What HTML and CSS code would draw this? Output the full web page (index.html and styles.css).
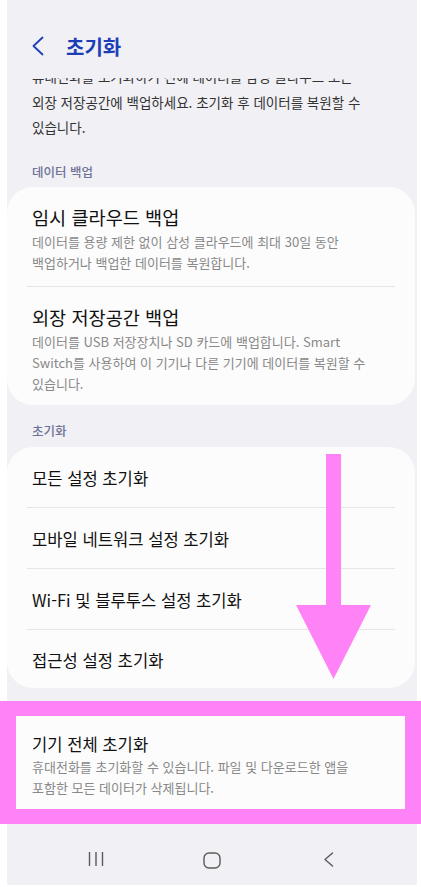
FILE: index.html
```html
<!DOCTYPE html>
<html lang="ko">
<head>
<meta charset="utf-8">
<link rel="stylesheet" href="styles.css">
</head>
<body>
<div class="page">
  <div class="screen">
    <header class="appbar">
      <svg class="back" width="12" height="20" viewBox="0 0 12 20"><path d="M10.5 1.5 L1.5 10 L10.5 18.5"/></svg>
      <h1 class="title">초기화</h1>
    </header>

    <div class="intro-clip">
      <p class="intro">휴대전화를 초기화하기 전에 데이터를 삼성 클라우드 또는<br>외장 저장공간에 백업하세요. 초기화 후 데이터를 복원할 수<br>있습니다.</p>
    </div>

    <div class="section-label first">데이터 백업</div>
    <div class="card">
      <div class="item">
        <div class="item-title big">임시 클라우드 백업</div>
        <div class="item-sub">데이터를 용량 제한 없이 삼성 클라우드에 최대 30일 동안<br>백업하거나 백업한 데이터를 복원합니다.</div>
      </div>
      <div class="divider"></div>
      <div class="item last">
        <div class="item-title big">외장 저장공간 백업</div>
        <div class="item-sub">데이터를 USB 저장장치나 SD 카드에 백업합니다. Smart<br>Switch를 사용하여 이 기기나 다른 기기에 데이터를 복원할 수<br>있습니다.</div>
      </div>
    </div>

    <div class="section-label">초기화</div>
    <div class="card">
      <div class="row">모든 설정 초기화</div>
      <div class="divider"></div>
      <div class="row">모바일 네트워크 설정 초기화</div>
      <div class="divider"></div>
      <div class="row">Wi-Fi 및 블루투스 설정 초기화</div>
      <div class="divider"></div>
      <div class="row last">접근성 설정 초기화</div>
    </div>

    <div class="highlight">
      <div class="hl-item">
        <div class="item-title">기기 전체 초기화</div>
        <div class="item-sub">휴대전화를 초기화할 수 있습니다. 파일 및 다운로드한 앱을<br>포함한 모든 데이터가 삭제됩니다.</div>
      </div>
    </div>

    <nav class="navbar">
      <svg class="nav-icon" width="16" height="14" viewBox="0 0 16 14"><path d="M1.5 0.5 V13.5 M8 0.5 V13.5 M14.5 0.5 V13.5"/></svg>
      <svg class="nav-icon" width="18" height="17" viewBox="0 0 18 17"><rect x="1" y="1" width="16" height="15" rx="5"/></svg>
      <svg class="nav-icon" width="11" height="15" viewBox="0 0 11 15"><path d="M9.5 1 L2 7.5 L9.5 14"/></svg>
    </nav>
  </div>

  <svg class="arrow" width="90" height="235" viewBox="0 0 90 235">
    <rect x="36" y="4" width="15" height="152" />
    <polygon points="6,155 81,155 43.5,229" />
  </svg>
</div>
</body>
</html>
```

FILE: styles.css
```css
html, body {
  margin: 0;
  padding: 0;
  background: #ffffff;
}

body {
  font-family: "Noto Sans CJK KR", "Noto Sans", sans-serif;
  color: #111111;
}

.page {
  position: relative;
  width: 421px;
  height: 887px;
  overflow: hidden;
}

.screen {
  margin-left: 7px;
  width: 410px;
  height: 885px;
  background: #f0f0f5;
  display: flex;
  flex-direction: column;
}

.appbar {
  height: 78px;
  box-sizing: border-box;
  padding: 34px 0 0 25px;
  display: flex;
  align-items: flex-start;
  gap: 22px;
  flex-shrink: 0;
}

.back {
  margin-top: 2px;
  fill: none;
  stroke: #1c3eb8;
  stroke-width: 1.8;
  stroke-linecap: round;
  stroke-linejoin: round;
}

.title {
  margin: 0;
  font-size: 20px;
  line-height: 26px;
  font-weight: 700;
  color: #1c3eb8;
}

.intro-clip {
  height: 63px;
  overflow: hidden;
  flex-shrink: 0;
}

.intro {
  margin: -14px 0 0;
  padding: 0 25px;
  font-size: 13.5px;
  line-height: 25.5px;
  color: #333333;
  white-space: nowrap;
}

.section-label {
  padding: 18px 25px 8px;
  font-size: 12.5px;
  line-height: 16px;
  font-weight: 500;
  color: #6f7398;
}

.section-label.first {
  padding-top: 23px;
  padding-bottom: 7px;
}

.card {
  margin-right: 2px;
  background: #fcfcfc;
  border-radius: 26px;
  flex-shrink: 0;
}

.item {
  padding: 18px 25px 13px;
}

.item.last {
  padding-bottom: 11px;
}

.item-title {
  font-size: 16.6px;
  line-height: 22px;
  color: #111111;
  white-space: nowrap;
}

.item-title.big {
  font-size: 18.6px;
  line-height: 24px;
}

.item-sub {
  margin-top: 2px;
  font-size: 13px;
  line-height: 21px;
  color: #888888;
  white-space: nowrap;
}

.divider {
  height: 1px;
  margin: 0 20px;
  background: #e6e6e9;
}

.row {
  padding: 20px 25px 18px;
  font-size: 16.6px;
  line-height: 22px;
  color: #111111;
  white-space: nowrap;
}

.row.last {
  padding-top: 19px;
  padding-bottom: 17px;
}

.highlight {
  margin: 13px -4px 0 -7px;
  border-style: solid;
  border-color: #ff82f7;
  border-width: 15px 16px;
  background: #fcfcfc;
  flex-shrink: 0;
}

.hl-item {
  padding: 17px 16px 11px;
}

.hl-item .item-sub {
  margin-top: 1px;
}

.navbar {
  height: 61px;
  box-sizing: border-box;
  padding-top: 28px;
  display: grid;
  grid-template-columns: repeat(3, 116px);
  justify-content: center;
  justify-items: center;
  align-items: start;
  flex-shrink: 0;
}

.nav-icon {
  fill: none;
  stroke: #5a5a5a;
  stroke-width: 1.4;
  stroke-linecap: round;
  stroke-linejoin: round;
}

.arrow {
  position: absolute;
  left: 290px;
  top: 450px;
  fill: #ff82f7;
}
```
